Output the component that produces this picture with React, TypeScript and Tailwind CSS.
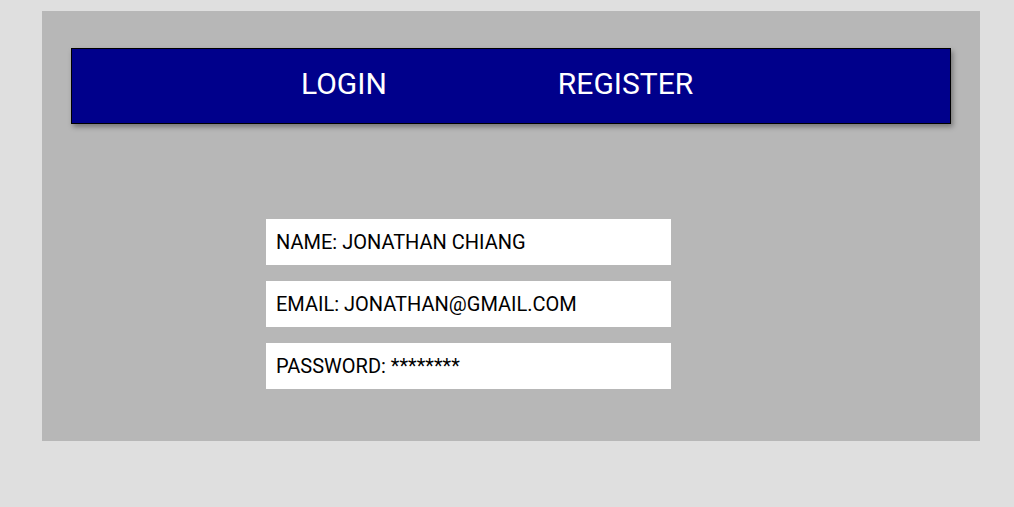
export default function App() {
  const fields = [
    { label: 'NAME', value: 'JONATHAN CHIANG' },
    { label: 'EMAIL', value: 'JONATHAN@GMAIL.COM' },
    { label: 'PASSWORD', value: '********' },
  ]

  return (
    <div className="w-[1014px] h-[507px] bg-[#dfdfdf] pt-[11px] pl-[42px] font-['Roboto',sans-serif]">
      <div className="w-[938px] h-[430px] bg-[#b7b7b7] px-[29px] pt-[37px]">
        {/* nav */}
        <div className="h-[76px] bg-[#00008b] border border-black shadow-[2px_3px_5px_rgba(0,0,0,0.35)] flex items-center pl-[229px] pb-[6px] gap-[171px] text-white text-[30px]">
          <span>LOGIN</span>
          <span>REGISTER</span>
        </div>

        {/* profile */}
        <div className="mt-[95px] ml-[195px] w-[405px] flex flex-col gap-[16px]">
          {fields.map(f => (
            <div key={f.label} className="h-[46px] bg-white flex items-center pl-[10px] text-[20px] text-black">
              {f.label}: {f.value}
            </div>
          ))}
        </div>
      </div>
    </div>
  )
}
